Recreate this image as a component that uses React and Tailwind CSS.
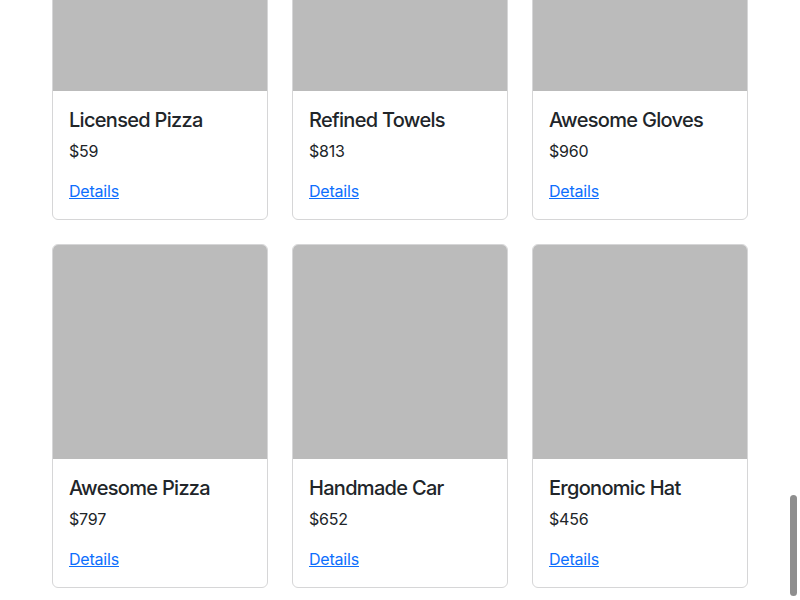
const products = [
  { name: 'Licensed Pizza', price: 59 },
  { name: 'Refined Towels', price: 813 },
  { name: 'Awesome Gloves', price: 960 },
  { name: 'Awesome Pizza', price: 797 },
  { name: 'Handmade Car', price: 652 },
  { name: 'Ergonomic Hat', price: 456 },
];

function ProductCard({ name, price }) {
  return (
    <div className="flex flex-col bg-white border border-[#d6d6d7] rounded-[6px] overflow-hidden">
      <div className="h-[214px] bg-[#bbbbbb]" />
      <div className="p-4">
        <h5 className="text-[20px] leading-[24px] font-medium tracking-[-0.7px] mt-px mb-[7px] text-[#212529]">{name}</h5>
        <p className="text-[16px] leading-[24px] tracking-[-0.2px] mb-4 text-[#212529]">${price}</p>
        <a href="#" className="text-[16px] leading-[24px] tracking-[-0.2px] text-[#0d6efd] underline">Details</a>
      </div>
    </div>
  );
}

export default function App() {
  return (
    <div className="relative h-[600px] overflow-hidden bg-white font-['Inter','Liberation_Sans',sans-serif]">
      <div className="w-[720px] mx-auto px-3 mt-[-124px]">
        <div className="grid grid-cols-3 gap-x-6 gap-y-6">
          {products.map(p => (
            <ProductCard key={p.name} {...p} />
          ))}
        </div>
      </div>
      {/* overlay scrollbar */}
      <div className="absolute right-[3px] top-[495px] w-[7px] h-[101px] rounded-full bg-[#8e8e8e]" />
    </div>
  );
}
